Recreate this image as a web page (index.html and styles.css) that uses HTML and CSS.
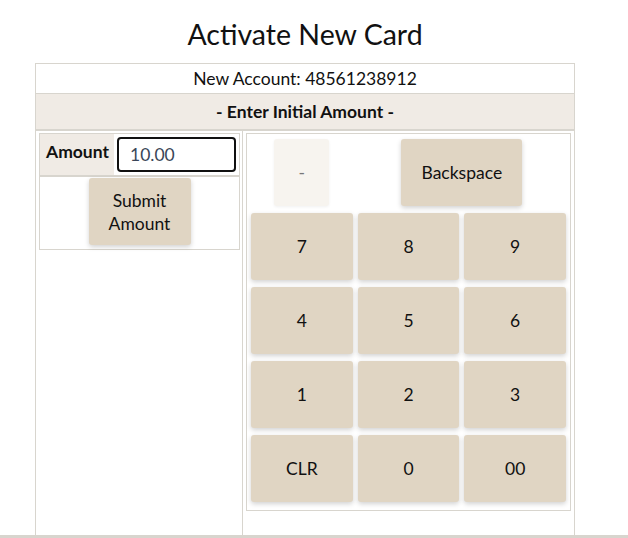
FILE: index.html
```html
<!DOCTYPE html>
<html lang="en">
<head>
  <meta charset="UTF-8">
  <meta name="viewport" content="width=device-width, initial-scale=1.0">
  <title>Activate New Card</title>
  <link rel="stylesheet" href="styles.css">
</head>
<body>
  <main class="page">
    <h1>Activate New Card</h1>
    <div class="card">
      <div class="account">New Account: 48561238912</div>
      <div class="section-head">- Enter Initial Amount -</div>
      <div class="card-body">
        <div class="left-cell">
          <div class="amount-box">
            <div class="amount-row">
              <div class="amount-label">Amount</div>
              <div class="amount-field">
                <input type="text" id="amount" value="10.00">
              </div>
            </div>
            <div class="submit-row">
              <button class="key submit-btn">Submit<br>Amount</button>
            </div>
          </div>
        </div>
        <div class="right-cell">
          <div class="keypad">
            <button class="key minus-btn">-</button>
            <button class="key back-btn">Backspace</button>
            <button class="key">7</button>
            <button class="key">8</button>
            <button class="key">9</button>
            <button class="key">4</button>
            <button class="key">5</button>
            <button class="key">6</button>
            <button class="key">1</button>
            <button class="key">2</button>
            <button class="key">3</button>
            <button class="key">CLR</button>
            <button class="key">0</button>
            <button class="key">00</button>
          </div>
        </div>
      </div>
    </div>
  </main>
  <div class="bottom-rule"></div>
</body>
</html>
```

FILE: styles.css
```css
body {
  font-family: 'Lato', 'Liberation Sans', sans-serif;
  margin: 0;
  padding: 0;
  color: #111;
  background: #ffffff;
}

.page {
  padding-right: 18px;
}

h1 {
  margin: 17px 0 12px;
  font-size: 28.5px;
  font-weight: normal;
  text-align: center;
  line-height: 34px;
}

.card {
  width: 540px;
  margin: 0 auto;
  border: 1px solid #d8d5ce;
  border-bottom: none;
  box-sizing: border-box;
  font-size: 17.5px;
}

.account {
  height: 29px;
  line-height: 29px;
  text-align: center;
  border-bottom: 1px solid #d8d5ce;
}

.section-head {
  height: 35px;
  line-height: 36px;
  text-align: center;
  font-weight: bold;
  background-color: #f0ebe5;
  border-bottom: 2px solid #d8d5ce;
}

.card-body {
  display: grid;
  grid-template-columns: 207px 1fr;
  height: 404px;
}

.left-cell {
  padding: 2px 2px 0 3px;
  border-right: 1px solid #d8d5ce;
}

.amount-box {
  border: 1px solid #d8d5ce;
}

.amount-row {
  display: flex;
  height: 41px;
  border-bottom: 2px solid #d8d5ce;
}

.amount-label {
  width: 75px;
  background-color: #f0ebe5;
  font-weight: bold;
  padding: 7px 0 0 6px;
  box-sizing: border-box;
  border-right: 1px solid #fff;
}

.amount-field {
  flex: 1;
  padding: 3px 3px 0 2px;
}

.amount-field input {
  width: 119px;
  height: 35px;
  box-sizing: border-box;
  border: 2px solid #111;
  border-radius: 4px;
  outline: none;
  padding: 0 0 0 11px;
  font-family: 'Lato', 'Liberation Sans', sans-serif;
  font-size: 17.5px;
  color: #3a4658;
}

.submit-row {
  display: flex;
  justify-content: center;
  padding: 1px 0 4px;
}

.key {
  font-family: 'Lato', 'Liberation Sans', sans-serif;
  font-size: 17.5px;
  color: #111;
  background-color: #e0d5c3;
  border: none;
  border-radius: 3px;
  box-shadow: 0 2px 5px rgba(0,0,0,0.18);
  cursor: pointer;
  padding: 0;
}

.key:hover {
  background-color: #d6c9b3;
}

.submit-btn {
  width: 102px;
  height: 67px;
  line-height: 23px;
}

.right-cell {
  padding: 2px 3px 0 3px;
}

.keypad {
  display: grid;
  grid-template-columns: repeat(3, 1fr);
  grid-template-rows: repeat(5, 67px);
  column-gap: 5px;
  row-gap: 7px;
  padding: 5px 4px 8px;
  border: 1px solid #d8d5ce;
}

.minus-btn {
  width: 55px;
  justify-self: center;
  background-color: #f7f4ef;
  color: #777;
  box-shadow: 0 1px 3px rgba(0,0,0,0.06);
}

.back-btn {
  grid-column: 2 / span 2;
  width: 121px;
  justify-self: center;
}

.bottom-rule {
  border-top: 3px solid #d8d5ce;
}
```
